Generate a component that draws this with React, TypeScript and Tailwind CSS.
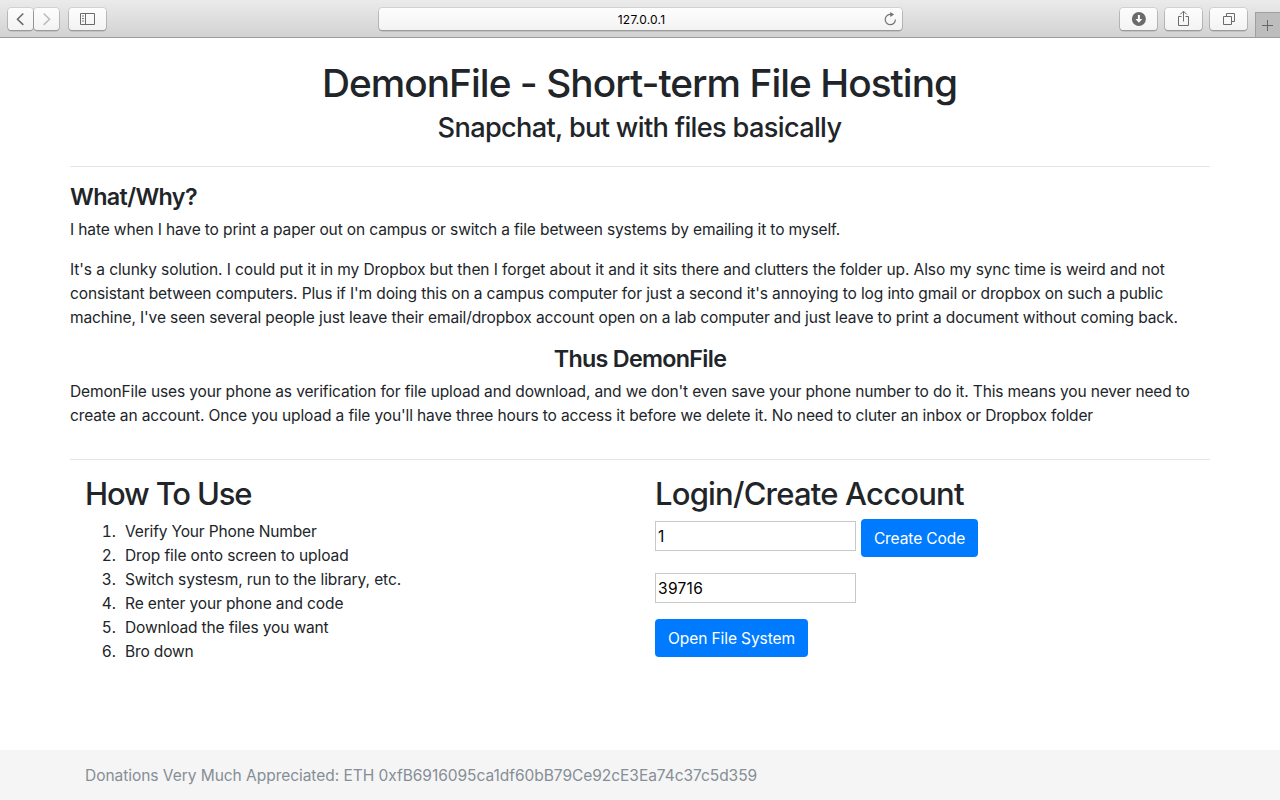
import type { ReactNode } from "react";

const BUTTON =
  "flex h-[22px] items-center justify-center rounded-[3.5px] bg-linear-to-b from-[#fdfdfd] to-[#f3f3f3] shadow-[0_0_0_1px_rgba(0,0,0,0.09),0_1px_0_0.5px_rgba(0,0,0,0.2)]";

function ToolButton({ width, children }: { width: string; children: ReactNode }) {
  return <div className={`${BUTTON} ${width}`}>{children}</div>;
}

function Toolbar() {
  return (
    <header className="flex h-[38px] items-start border-b border-[#9d9d9d] bg-linear-to-b from-[#ebebeb] to-[#d2d2d2] pl-2 pt-2">
      <div className="flex gap-px">
        <ToolButton width="w-[25px]">
          <svg width="25" height="22" viewBox="0 0 25 22" fill="none" stroke="#6b6b6b" strokeWidth="1.6">
            <path d="M15.3 5.5 9.5 11.2l5.8 5.7" />
          </svg>
        </ToolButton>
        <ToolButton width="w-[25px]">
          <svg width="25" height="22" viewBox="0 0 25 22" fill="none" stroke="#bdbdbd" strokeWidth="1.6">
            <path d="m9.7 5.5 5.8 5.7-5.8 5.7" />
          </svg>
        </ToolButton>
      </div>
      <div className="ml-[10px]">
        <ToolButton width="w-[37px]">
          <svg width="37" height="22" viewBox="0 0 37 22" fill="none" stroke="#6b6b6b">
            <path d="M11.5 5.5h14v11h-14zM16.5 5.5v11" />
            <path d="M13 8h2M13 10.5h2M13 13h2" strokeWidth="0.9" />
          </svg>
        </ToolButton>
      </div>
      <div className={`${BUTTON} relative ml-[273px] w-[523px] text-[12px] tracking-[0.2px] text-black`}>
        <span className="relative left-[1px] top-[1px]">127.0.0.1</span>
        <svg className="absolute right-0 top-0" width="24" height="22" viewBox="0 0 24 22" fill="none" stroke="#747474" strokeWidth="1.2">
          <path d="M13.1 6.5a5.1 5.1 0 1 0 4.3 5" />
          <path d="m12.2 3.9 4 2.7-4 2.5z" fill="#747474" stroke="none" />
        </svg>
      </div>
      <div className="ml-[218px] flex gap-2">
        <ToolButton width="w-[37px]">
          <svg width="37" height="22" viewBox="0 0 37 22" fill="none">
            <circle cx="18.9" cy="11" r="7" fill="#6b6b6b" />
            <path d="M17.9 7h2v4h2.4l-3.4 3.8-3.4-3.8h2.4z" fill="#fff" />
          </svg>
        </ToolButton>
        <ToolButton width="w-[37px]">
          <svg width="37" height="22" viewBox="0 0 37 22" fill="none" stroke="#6b6b6b">
            <path d="M16.5 8.5h-3v9h10v-9h-3M18.5 13.5v-10M15.3 6.4l3.2-3.2 3.2 3.2" />
          </svg>
        </ToolButton>
        <ToolButton width="w-[37px]">
          <svg width="37" height="22" viewBox="0 0 37 22" fill="none" stroke="#6b6b6b">
            <path d="M13.5 8.5h8v8h-8zM16.5 8.5v-3h8v8h-3" />
          </svg>
        </ToolButton>
      </div>
      <div className="ml-2 mt-1 h-[25px] w-[25px] border-l border-t border-[#9f9f9f] bg-[#bdbdbd]">
        <svg width="24" height="24" viewBox="0 0 24 24" fill="none" stroke="#656565">
          <path d="M6 12.5h11M11.5 7v11" />
        </svg>
      </div>
    </header>
  );
}

const steps = [
  { text: "Verify Your Phone Number", tracking: "tracking-[-0.16px]" },
  { text: "Drop file onto screen to upload", tracking: "tracking-[-0.1px]" },
  { text: "Switch systesm, run to the library, etc.", tracking: "tracking-[-0.1px]" },
  { text: "Re enter your phone and code", tracking: "tracking-[-0.12px]" },
  { text: "Download the files you want", tracking: "tracking-[-0.14px]" },
  { text: "Bro down", tracking: "tracking-[-0.15px]" },
];

export default function App() {
  return (
    <div className="flex h-[800px] w-[1280px] flex-col overflow-hidden bg-white font-['Inter',sans-serif] text-[15.52px] leading-6 text-[#212529]">
      <Toolbar />
      <main className="mx-auto w-[1140px] flex-1 whitespace-nowrap pt-[23px]">
        <h1 className="mb-[7px] pr-px text-center text-[38.8px] font-medium leading-[44px] tracking-[-0.96px]">
          DemonFile - Short-term File Hosting
        </h1>
        <h3 className="pr-px text-center text-[27.2px] font-medium leading-[31px] tracking-[-0.68px]">
          Snapchat, but with files basically
        </h3>
        <hr className="mb-[17px] mt-[23px] border-t border-black/10" />
        <h4 className="mb-2 text-[23.3px] font-semibold leading-[26px] tracking-[-0.62px]">What/Why?</h4>
        <p className="mb-4 tracking-[-0.126px]">
          I hate when I have to print a paper out on campus or switch a file between systems by emailing it to myself.
        </p>
        <p className="mb-4">
          <span className="block tracking-[-0.089px]">
            It's a clunky solution. I could put it in my Dropbox but then I forget about it and it sits there and clutters the folder up. Also my sync time is weird and not
          </span>
          <span className="block tracking-[-0.115px]">
            consistant between computers. Plus if I'm doing this on a campus computer for just a second it's annoying to log into gmail or dropbox on such a public
          </span>
          <span className="block tracking-[-0.123px]">
            machine, I've seen several people just leave their email/dropbox account open on a lab computer and just leave to print a document without coming back.
          </span>
        </p>
        <h4 className="mb-2 text-center text-[23.3px] font-semibold leading-[26px] tracking-[-0.7px]">Thus DemonFile</h4>
        <p>
          <span className="block tracking-[-0.143px]">
            DemonFile uses your phone as verification for file upload and download, and we don't even save your phone number to do it. This means you never need to
          </span>
          <span className="block tracking-[-0.124px]">
            create an account. Once you upload a file you'll have three hours to access it before we delete it. No need to cluter an inbox or Dropbox folder
          </span>
        </p>
        <hr className="mb-4 mt-[31px] border-t border-black/10" />
        <div className="grid grid-cols-2">
          <section className="px-[15px]">
            <h2 className="mb-[9px] text-[31px] font-medium leading-[35px] tracking-[-1.15px]">How To Use</h2>
            <ol>
              {steps.map((step, i) => (
                <li key={step.text} className="grid grid-cols-[31px_auto] gap-[9px]">
                  <span className="text-right tabular-nums">{i + 1}.</span>
                  <span className={step.tracking}>{step.text}</span>
                </li>
              ))}
            </ol>
          </section>
          <section className="px-[15px]">
            <h2 className="mb-2 text-[31px] font-medium leading-[35px] tracking-[-0.79px]">Login/Create Account</h2>
            <div className="flex items-start gap-[5px]">
              <input
                defaultValue="1"
                className="mt-0.5 h-[30px] w-[201px] border border-[#c9c9c9] bg-white px-0.5 text-black tracking-[0.3px]"
              />
              <button className="h-[38px] w-[117px] rounded-[4px] bg-[#007bff] pt-0.5 text-white tracking-[-0.1px]">Create Code</button>
            </div>
            <input
              defaultValue="39716"
              className="mt-4 block h-[30px] w-[201px] border border-[#c9c9c9] bg-white px-0.5 text-black tracking-[0.3px]"
            />
            <button className="mt-4 block h-[38px] w-[153px] rounded-[4px] bg-[#007bff] pt-0.5 text-white tracking-[-0.1px]">
              Open File System
            </button>
          </section>
        </div>
      </main>
      <footer className="h-[50px] bg-[#f5f5f5] pl-[85px] pt-px leading-[50px] text-[#868e96] tracking-[-0.045px]">
        Donations Very Much Appreciated: ETH 0xfB6916095ca1df60bB79Ce92cE3Ea74c37c5d359
      </footer>
    </div>
  );
}
